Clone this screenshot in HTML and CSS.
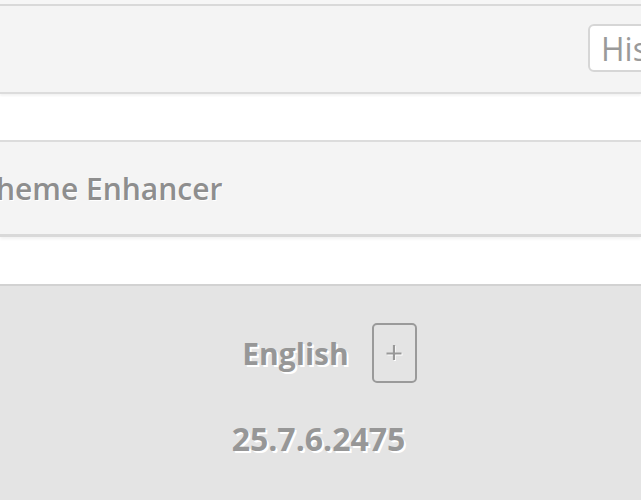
FILE: index.html
```html
<!DOCTYPE html>
<html lang="en">
<head>
  <meta charset="UTF-8">
  <meta name="viewport" content="width=device-width, initial-scale=1.0">
  <title>Settings</title>
  <link rel="stylesheet" href="styles.css">
</head>
<body>
  <div class="top-strip"></div>
  <header class="toolbar">
    <input class="search" type="text" placeholder="History">
  </header>
  <div class="gap"></div>
  <section class="panel">
    <h3 class="panel-title">Theme Enhancer</h3>
  </section>
  <div class="gap gap-low"></div>
  <footer class="footer">
    <div class="lang-row">
      <span class="lang">English</span>
      <button class="add-btn" aria-label="Add language">
        <svg width="18" height="18" viewBox="0 0 18 18">
          <path d="M10 2v15M2.5 10.5h15" stroke="#fff" stroke-width="2"/>
          <path d="M9 1v15M1.5 9.5h15" stroke="#999" stroke-width="2.2"/>
        </svg>
      </button>
    </div>
    <div class="version">25.7.6.2475</div>
  </footer>
</body>
</html>
```

FILE: styles.css
```css
* { box-sizing: border-box; margin: 0; padding: 0; }
html, body { height: 100%; }
body {
  font-family: 'Open Sans', 'Liberation Sans', sans-serif;
  background: #ffffff;
  overflow: hidden;
}
.top-strip { height: 4px; background: #f6f6f6; }
.toolbar {
  display: flex;
  justify-content: flex-end;
  align-items: center;
  height: 90px;
  background: #f4f4f4;
  border-top: 2px solid #d9d9d9;
  border-bottom: 2px solid #dcdcdc;
  box-shadow: 0 2px 2px rgba(0, 0, 0, 0.05);
  padding-bottom: 2px;
}
.search {
  flex: none;
  width: 160px;
  height: 48px;
  margin-right: -107px;
  padding: 0 11px;
  border: 2px solid #d6d6d6;
  border-radius: 6px;
  background: #fff;
  font-family: 'Open Sans', 'Liberation Sans', sans-serif;
  font-size: 32px;
  color: #999;
}
.search::placeholder { color: #9a9a9a; }
.gap { height: 46px; }
.gap-low { height: 47px; }
.panel {
  display: flex;
  align-items: center;
  height: 97px;
  background: #f4f4f4;
  border-top: 2px solid #dcdcdc;
  border-bottom: 3px solid #d9d9d9;
  box-shadow: 0 2px 3px rgba(0, 0, 0, 0.06);
}
.panel-title {
  margin-left: -21px;
  font-size: 30px;
  font-weight: 600;
  color: #8e8e8e;
  text-shadow: 1px 1px 0 #fff;
}
.footer {
  height: 220px;
  background: #e4e4e4;
  border-top: 2px solid #d2d2d2;
  padding-top: 37px;
  display: flex;
  flex-direction: column;
  align-items: center;
}
.lang-row {
  display: flex;
  align-items: center;
  gap: 23px;
  padding-left: 18px;
}
.lang, .version {
  font-size: 30px;
  font-weight: 700;
  color: #979797;
  text-shadow: 2px 2px 0 #fff;
}
.add-btn {
  display: flex;
  align-items: center;
  justify-content: center;
  width: 45px;
  height: 60px;
  border: 2px solid #9a9a9a;
  border-radius: 5px;
  background: transparent;
}
.version {
  margin-top: 34px;
  margin-left: -4px;
  font-size: 32px;
}
```
